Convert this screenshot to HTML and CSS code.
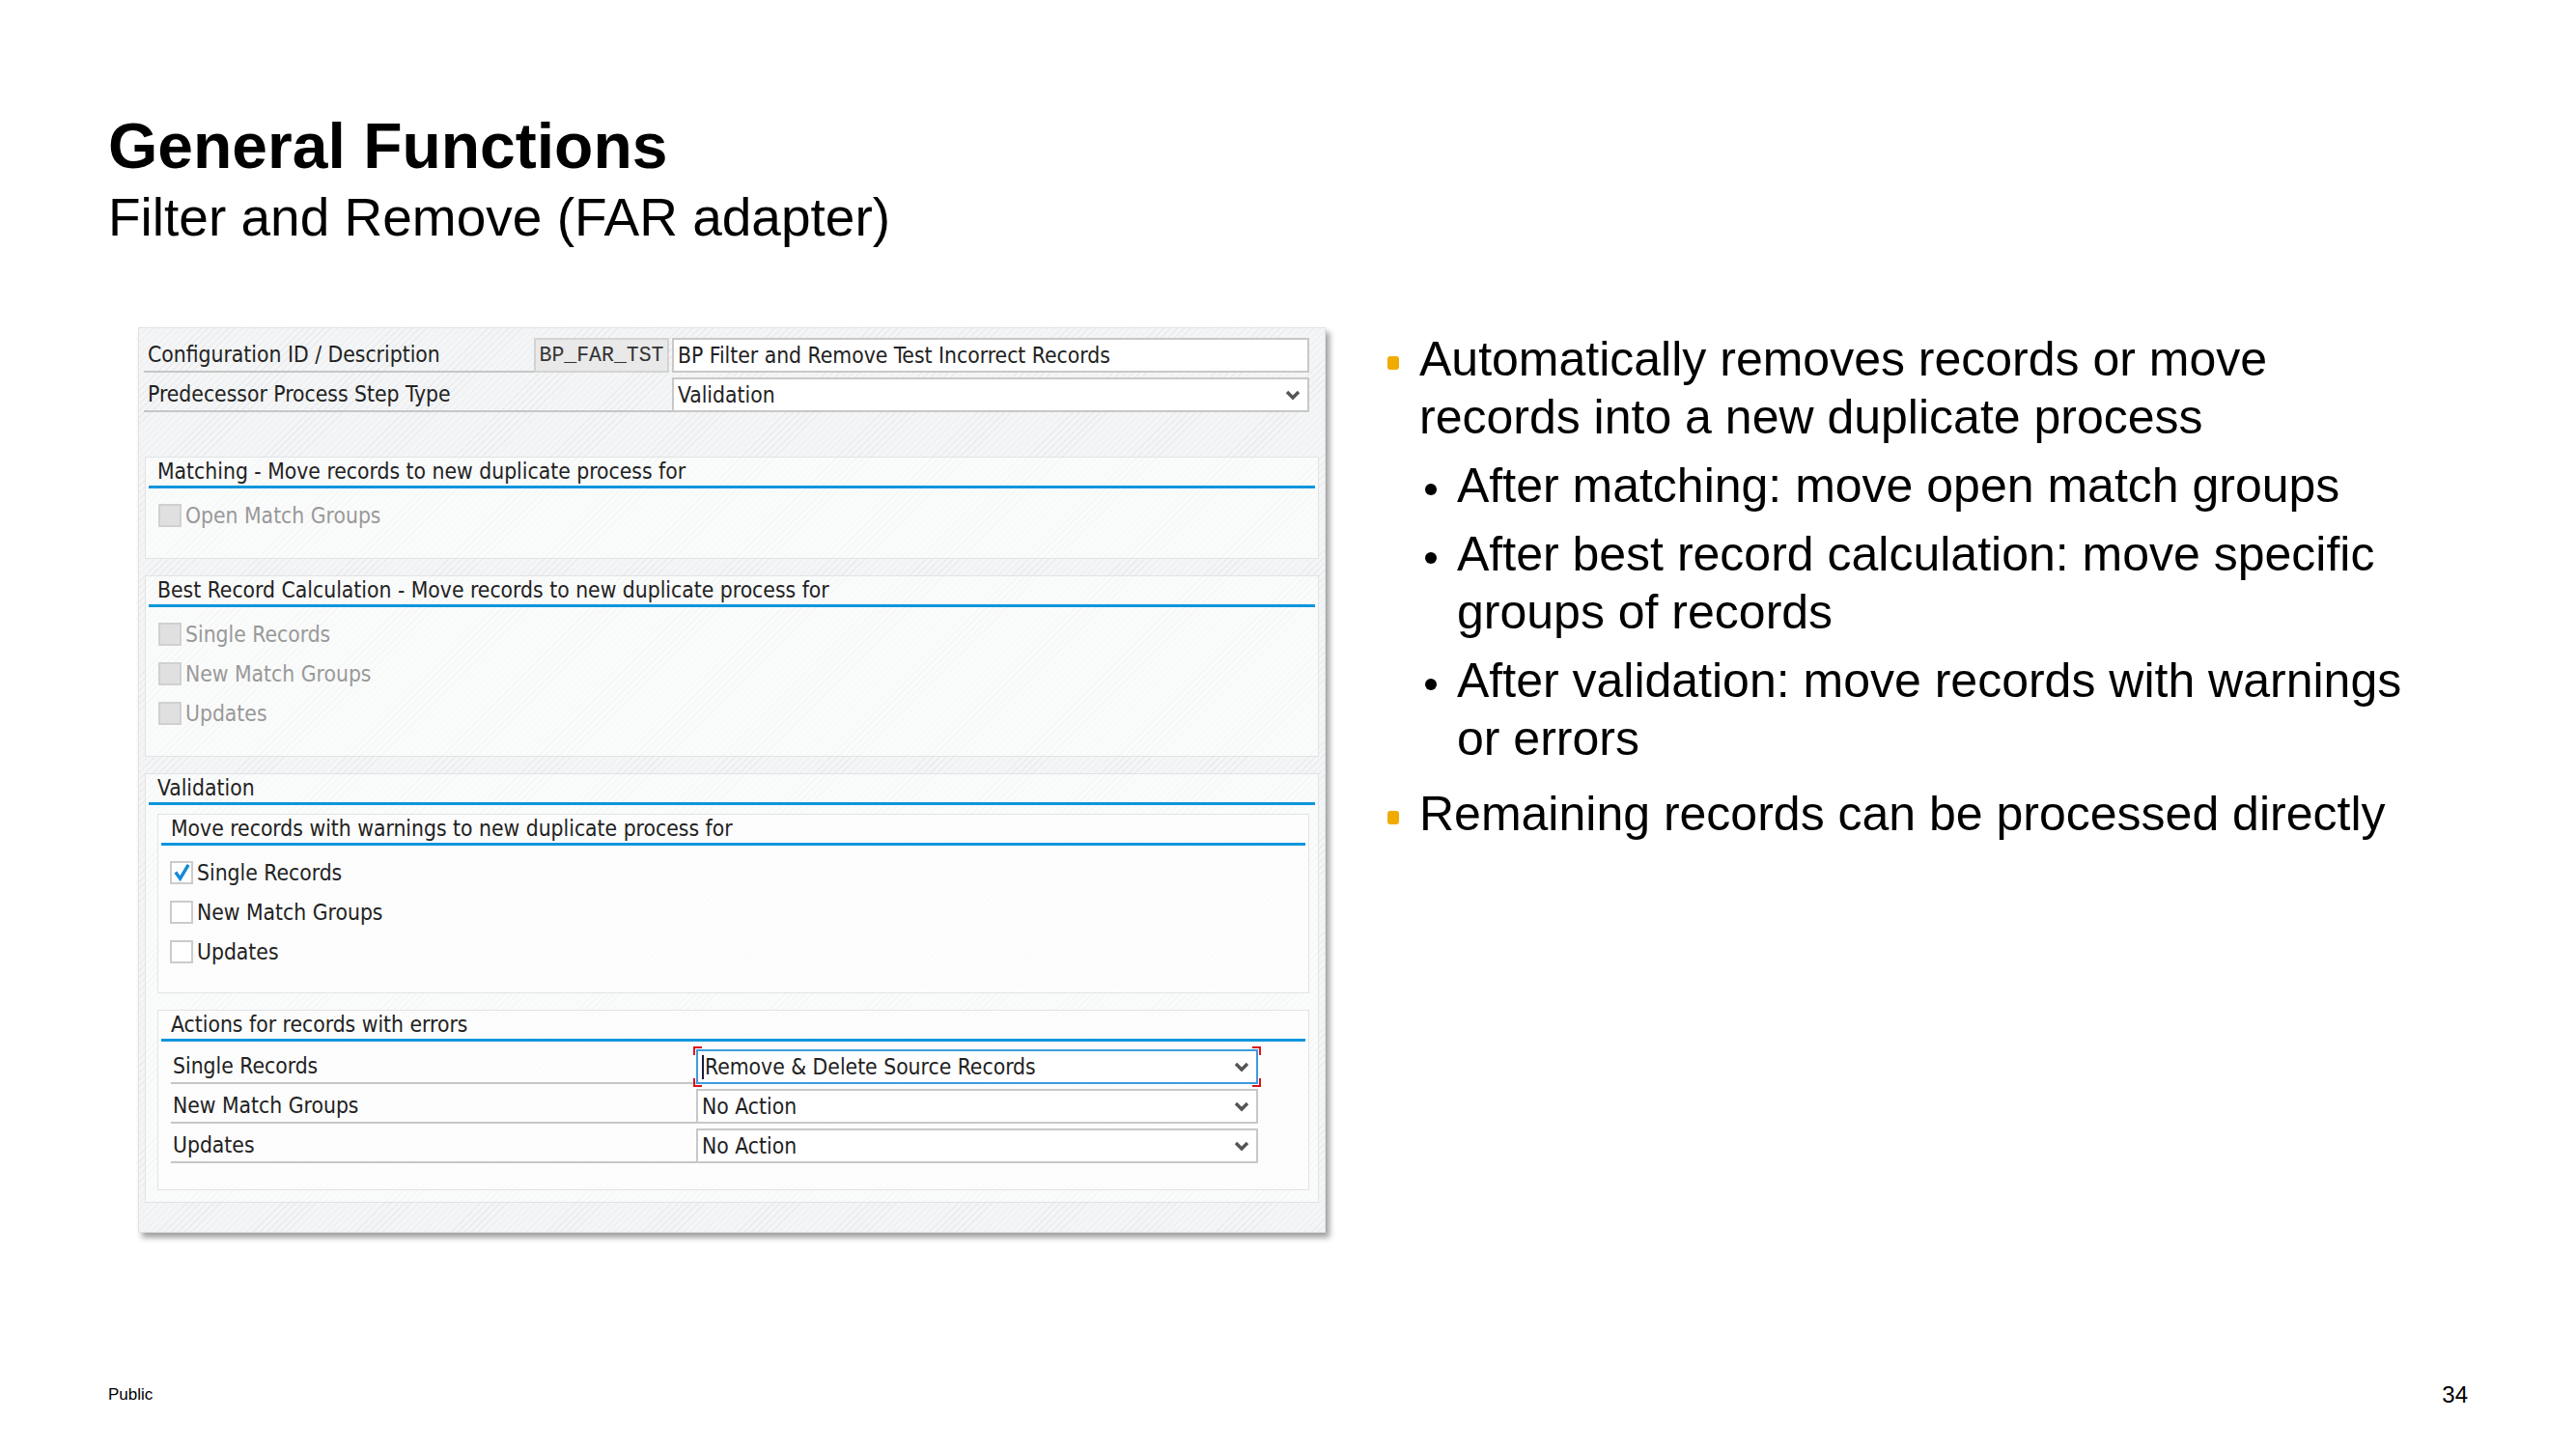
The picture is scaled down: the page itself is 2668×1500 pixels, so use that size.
FILE: index.html
```html
<!DOCTYPE html>
<html lang="en">
<head>
<meta charset="utf-8">
<title>General Functions</title>
<link rel="stylesheet" href="styles.css">
</head>
<body>
<div class="slide">
  <header class="head">
    <h1 class="title">General Functions</h1>
    <h2 class="subtitle">Filter and Remove (FAR adapter)</h2>
  </header>

  <div class="content">
    <div class="sap">
      <div class="toprow">
        <div class="lbl w1">Configuration ID / Description</div>
        <div class="idbox">BP_FAR_TST</div>
        <div class="input gap">BP Filter and Remove Test Incorrect Records</div>
      </div>
      <div class="toprow">
        <div class="lbl w2">Predecessor Process Step Type</div>
        <div class="input">Validation
          <svg class="chev" viewBox="0 0 16 11" width="16" height="11"><polyline points="2,2 8,8 14,2" fill="none" stroke="#555" stroke-width="3.4"/></svg>
        </div>
      </div>

      <section class="group g-match">
        <div class="ghead">Matching - Move records to new duplicate process for</div>
        <div class="items">
          <div class="cb disabled"><span class="box"></span>Open Match Groups</div>
        </div>
      </section>

      <section class="group">
        <div class="ghead">Best Record Calculation - Move records to new duplicate process for</div>
        <div class="items">
          <div class="cb disabled"><span class="box"></span>Single Records</div>
          <div class="cb disabled"><span class="box"></span>New Match Groups</div>
          <div class="cb disabled"><span class="box"></span>Updates</div>
        </div>
      </section>

      <section class="group g-val">
        <div class="ghead">Validation</div>
        <div class="inner inner1">
          <div class="ghead ihead">Move records with warnings to new duplicate process for</div>
          <div class="items iitems">
            <div class="cb"><span class="box"><svg viewBox="0 0 20 20" width="19" height="19"><path d="M3 10 L8 17 L17 2" fill="none" stroke="#1589d6" stroke-width="3.6"/></svg></span>Single Records</div>
            <div class="cb"><span class="box"></span>New Match Groups</div>
            <div class="cb"><span class="box"></span>Updates</div>
          </div>
        </div>
        <div class="inner inner2">
          <div class="ghead ihead">Actions for records with errors</div>
          <div class="arows">
            <div class="arow">
              <div class="alabel">Single Records</div>
              <div class="aselect focus">
                <span class="cursor"></span>Remove &amp; Delete Source Records
                <svg class="chev" viewBox="0 0 16 11" width="16" height="11"><polyline points="2,2 8,8 14,2" fill="none" stroke="#555" stroke-width="3.4"/></svg>
                <span class="corner tl"></span><span class="corner tr"></span><span class="corner bl"></span><span class="corner br"></span>
              </div>
            </div>
            <div class="arow">
              <div class="alabel">New Match Groups</div>
              <div class="aselect">No Action
                <svg class="chev" viewBox="0 0 16 11" width="16" height="11"><polyline points="2,2 8,8 14,2" fill="none" stroke="#555" stroke-width="3.4"/></svg>
              </div>
            </div>
            <div class="arow">
              <div class="alabel">Updates</div>
              <div class="aselect">No Action
                <svg class="chev" viewBox="0 0 16 11" width="16" height="11"><polyline points="2,2 8,8 14,2" fill="none" stroke="#555" stroke-width="3.4"/></svg>
              </div>
            </div>
          </div>
        </div>
      </section>
    </div>

    <ul class="bullets">
      <li class="l1">
        <span class="mk"></span>
        <div class="txt">Automatically removes records or move records into a new duplicate process
          <ul class="sub">
            <li><span class="dot"></span><span>After matching: move open match groups</span></li>
            <li><span class="dot"></span><span>After best record calculation: move specific groups of records</span></li>
            <li><span class="dot"></span><span>After validation: move records with warnings or errors</span></li>
          </ul>
        </div>
      </li>
      <li class="l1">
        <span class="mk"></span>
        <div class="txt">Remaining records can be processed directly</div>
      </li>
    </ul>
  </div>

  <footer class="footer">
    <span class="public">Public</span>
    <span class="pageno">34</span>
  </footer>
</div>
</body>
</html>
```

FILE: styles.css
```css
* { box-sizing: border-box; margin: 0; padding: 0; }
html, body { width: 2668px; height: 1500px; background: #fff; }
body { font-family: "Liberation Sans", Arial, sans-serif; color: #000; overflow: hidden; }

.slide {
  height: 1500px;
  display: flex;
  flex-direction: column;
  padding: 113px 112px 25px 112px;
}

.title { font-size: 66px; font-weight: 700; line-height: 76px; }
.subtitle { font-size: 55px; font-weight: 400; line-height: 64px; margin-top: 4px; }

.content { display: flex; align-items: flex-start; margin-top: 82px; }

/* SAP screenshot panel */
.sap {
  flex: none;
  margin-left: 31px;
  width: 1230px;
  height: 938px;
  padding: 10px 0 0 5px;
  font-family: "DejaVu Sans Condensed", "DejaVu Sans", sans-serif;
  font-stretch: condensed;
  font-size: 22.7px;
  color: #222;
  background-color: #f3f5f6;
  background-image: repeating-linear-gradient(135deg, rgba(0,0,0,0.04) 0 1px, transparent 1px 5px);
  border: 1px solid #e0e2e4;
  box-shadow: 4px 5px 6px rgba(0,0,0,0.38);
}

.toprow { display: flex; height: 36px; }
.toprow + .toprow { margin-top: 5px; }
.lbl { display: flex; align-items: center; padding-left: 4px; border-bottom: 2px solid #c6c6c6; }
.w1 { width: 404px; }
.w2 { width: 547px; }
.idbox {
  width: 140px;
  background: #e9e9e9;
  border: 2px solid #d3d3d3;
  font-family: "Liberation Mono", monospace;
  font-size: 21.5px;
  display: flex; align-items: center; justify-content: center;
  color: #333;
}
.input {
  width: 660px;
  background: #fff;
  border: 2px solid #c8c8c8;
  display: flex; align-items: center;
  padding-left: 4px;
}
.input.gap { margin-left: 3px; }
.chev { margin-left: auto; margin-right: 7px; flex: none; }

.group {
  width: 1216px;
  margin-left: 1px;
  border: 1px solid #e1e3e5;
  background: rgba(255,255,255,0.55);
  padding-bottom: 24px;
}
.g-match { margin-top: 46px; }
.group + .group { margin-top: 17px; }
.ghead {
  margin: 0 3px;
  height: 32px;
  padding-left: 9px;
  line-height: 29px;
  border-bottom: 3px solid #0f95dd;
  color: #222;
}
.items { padding: 7px 0 0 13px; }
.cb { height: 41px; display: flex; align-items: center; }
.box {
  flex: none;
  width: 24px; height: 24px;
  border: 2px solid #cbcbcb;
  background: #fff;
  margin-right: 4px;
  display: flex; align-items: center; justify-content: center;
}
.disabled { color: #999; }
.disabled .box { background: #e0e0e0; border-color: #d0d0d0; }

.g-val { padding-bottom: 12px; }
.inner {
  width: 1193px;
  margin: 9px 0 0 12px;
  border: 1px solid #e1e3e5;
  background: rgba(255,255,255,0.5);
}
.inner1 { padding-bottom: 22px; }
.inner2 { margin-top: 17px; padding-bottom: 27px; }
.ihead { padding-left: 10px; }
.iitems { padding-left: 12px; }

.arows { padding: 8px 0 0 13px; }
.arow { display: flex; height: 36px; }
.arow + .arow { margin-top: 5px; }
.alabel { width: 544px; display: flex; align-items: center; padding-left: 2px; border-bottom: 2px solid #c6c6c6; }
.aselect {
  position: relative;
  width: 582px;
  background: #fff;
  border: 2px solid #c8c8c8;
  display: flex; align-items: center;
  padding-left: 4px;
}
.aselect.focus { border-color: #3d9be0; }
.cursor { width: 2px; height: 25px; background: #1a1a40; margin-right: 1px; }
.corner { position: absolute; width: 9px; height: 9px; border: 0 solid #d9141e; }
.corner.tl { top: -5px; left: -5px; border-top-width: 2px; border-left-width: 2px; }
.corner.tr { top: -5px; right: -5px; border-top-width: 2px; border-right-width: 2px; }
.corner.bl { bottom: -5px; left: -5px; border-bottom-width: 2px; border-left-width: 2px; }
.corner.br { bottom: -5px; right: -5px; border-bottom-width: 2px; border-right-width: 2px; }

/* Bullets */
.bullets { list-style: none; margin: 3px 0 0 64px; width: 1068px; font-size: 50px; line-height: 60px; color: #000; }
.l1 { display: flex; }
.l1 + .l1 { margin-top: 18px; }
.mk { flex: none; width: 12px; height: 14px; background: #f0ab00; border-radius: 3px; margin: 27px 21px 0 0; }
.txt { width: 1035px; }
.sub { list-style: none; margin-top: 11px; }
.sub li { display: flex; }
.sub li + li { margin-top: 11px; }
.dot { flex: none; width: 12px; height: 12px; border-radius: 50%; background: #000; margin: 28px 21px 0 6px; }

/* Footer */
.footer { margin-top: auto; height: 60px; display: flex; justify-content: space-between; align-items: center; }
.public { font-size: 17px; }
.pageno { font-size: 24px; }
```
